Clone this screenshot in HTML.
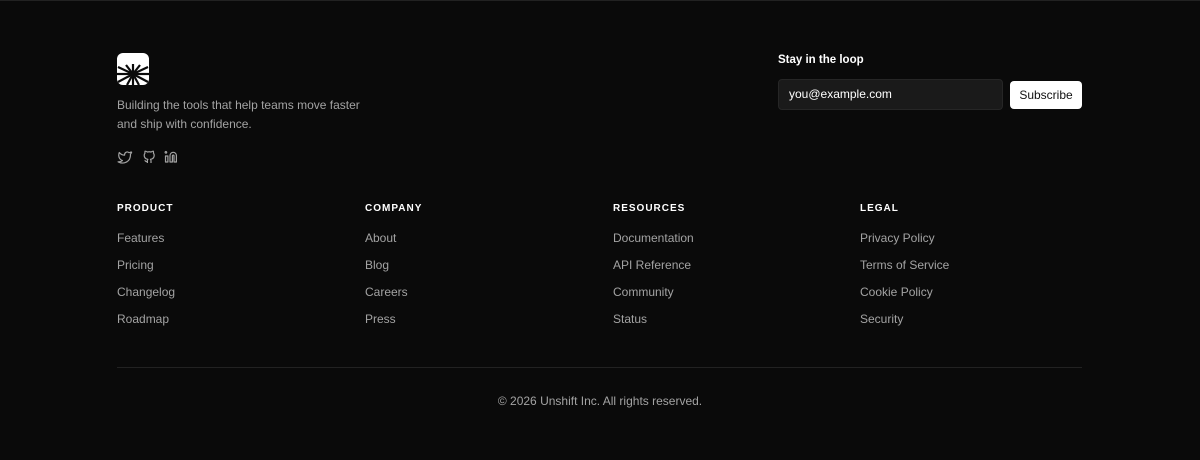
<!DOCTYPE html>
<html><head><style>
body{margin:0;background:#0a0a0a;width:1200px;height:460px;overflow:hidden;font-family:"Liberation Sans",sans-serif;position:relative;border-top:1px solid #222;box-sizing:border-box}
.a{position:absolute}
.desc{left:117px;top:95px;color:#a3a3a3;font-size:12px;line-height:19px}
.h{font-size:10px;font-weight:bold;color:#fff;letter-spacing:1px;top:202px}
.l{color:#a3a3a3;font-size:12px}
</style></head><body>
<svg class="a" style="left:117px;top:52px" width="32" height="32" viewBox="0 0 32 32">
<rect width="32" height="32" rx="6" fill="#fff"/>
<g stroke="#0a0a0a" stroke-width="2.2">
<line x1="16" y1="21" x2="16" y2="32"/><line x1="16" y1="21" x2="10" y2="32"/><line x1="16" y1="21" x2="22" y2="32"/>
<line x1="16" y1="21" x2="1" y2="29"/><line x1="16" y1="21" x2="31" y2="29"/>
<line x1="16" y1="21" x2="0" y2="21"/><line x1="16" y1="21" x2="32" y2="21"/>
<line x1="16" y1="21" x2="1" y2="14"/><line x1="16" y1="21" x2="31" y2="14"/>
<line x1="16" y1="21" x2="9" y2="12"/><line x1="16" y1="21" x2="23" y2="12"/><line x1="16" y1="21" x2="16" y2="11"/>
</g>
<circle cx="16" cy="21" r="3.5" fill="#0a0a0a"/>
</svg>
<div class="a desc">Building the tools that help teams move faster<br>and ship with confidence.</div>
<svg class="a" style="left:117px;top:148px" width="70" height="16" viewBox="0 0 70 16" fill="none" stroke="#a3a3a3" stroke-width="1.2" stroke-linejoin="round">
<path d="M14 3c-.6.4-1.300.6-2 .7A2.600 2.600 0 0 0 7.600 5.500v.6C5.500 6.200 3.600 5.200 2.300 3.500c0 0-2.500 5.600 3.100 8.100-1.300.9-2.800 1.300-4.300 1.200 5.600 3.100 12.400 0 12.400-7.100 0-.2 0-.4-.1-.5.600-.6 1-1.300 1.200-2z"/>
<path d="M34 14v-2.200c0-.7-.1-1.100-.5-1.500 1.900-.2 3.700-.9 3.700-4 0-.9-.3-1.600-.8-2.200.2-.6.2-1.300-.1-1.900 0 0-.7-.2-2.200.8a7 7 0 0 0-3.800 0C28.800 2 28.100 2.200 28.100 2.200c-.3.600-.3 1.300-.1 1.900-.5.600-.8 1.300-.8 2.200 0 3.100 1.800 3.800 3.700 4-.4.400-.5.900-.5 1.500V14M30.400 12.500c-2 .6-2-1-2.800-1.200"/>
<path d="M53 6.500a3.200 3.200 0 0 1 6.400 0V13h-2.400V6.800c0-1-1.600-1-1.600 0V13H53zM48.500 7h2.400v6h-2.400zM49.700 3.300a.8.8 0 1 0 0 .1z"/>
</svg>
<div class="a" style="left:778px;top:53px;color:#fff;font-size:11.5px;font-weight:bold">Stay in the loop</div>
<div class="a" style="left:778px;top:78px;width:225px;height:31px;background:#1a1a1a;border:1px solid #262626;border-radius:4px;box-sizing:border-box;color:#fff;font-size:12px;line-height:29px;padding-left:10px">you@example.com</div>
<div class="a" style="left:1010px;top:80px;width:72px;height:28px;background:#fff;border-radius:4px;color:#111;font-size:12px;text-align:center;line-height:28px">Subscribe</div>

<div class="a h" style="left:117px">PRODUCT</div>
<div class="a h" style="left:365px">COMPANY</div>
<div class="a h" style="left:613px">RESOURCES</div>
<div class="a h" style="left:860px">LEGAL</div>

<div class="a l" style="left:117px;top:230px">Features</div>
<div class="a l" style="left:117px;top:257px">Pricing</div>
<div class="a l" style="left:117px;top:284px">Changelog</div>
<div class="a l" style="left:117px;top:311px">Roadmap</div>
<div class="a l" style="left:365px;top:230px">About</div>
<div class="a l" style="left:365px;top:257px">Blog</div>
<div class="a l" style="left:365px;top:284px">Careers</div>
<div class="a l" style="left:365px;top:311px">Press</div>
<div class="a l" style="left:613px;top:230px">Documentation</div>
<div class="a l" style="left:613px;top:257px">API Reference</div>
<div class="a l" style="left:613px;top:284px">Community</div>
<div class="a l" style="left:613px;top:311px">Status</div>
<div class="a l" style="left:860px;top:230px">Privacy Policy</div>
<div class="a l" style="left:860px;top:257px">Terms of Service</div>
<div class="a l" style="left:860px;top:284px">Cookie Policy</div>
<div class="a l" style="left:860px;top:311px">Security</div>

<div class="a" style="left:117px;top:366px;width:965px;height:1px;background:#222"></div>
<div class="a" style="left:0;width:1200px;top:393px;text-align:center;color:#a3a3a3;font-size:12px">© 2026 Unshift Inc. All rights reserved.</div>
</body></html>
